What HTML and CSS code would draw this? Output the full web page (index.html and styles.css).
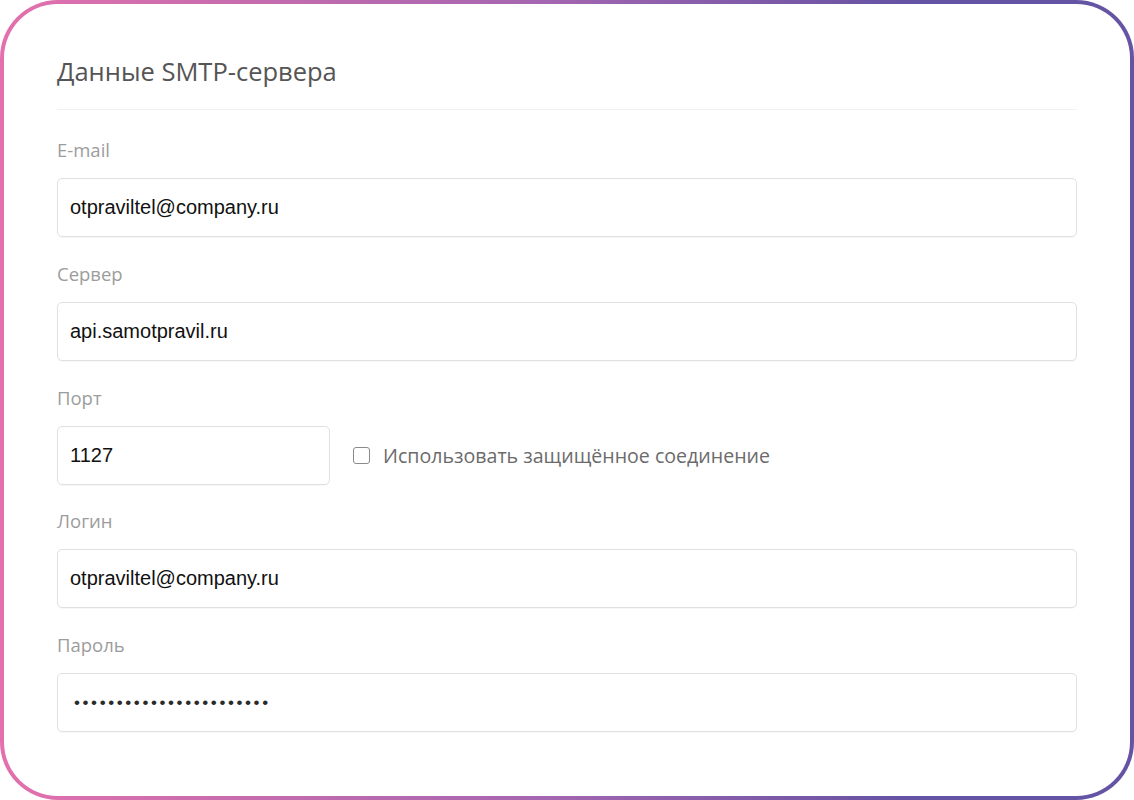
FILE: index.html
```html
<!DOCTYPE html>
<html lang="ru">
<head>
<meta charset="utf-8">
<title>Данные SMTP-сервера</title>
<link rel="stylesheet" href="styles.css">
</head>
<body>
<div class="frame">
  <div class="card">
    <h2 class="title">Данные SMTP-сервера</h2>
    <div class="form">
      <div class="group">
        <div class="label">E-mail</div>
        <div class="input">otpraviltel@company.ru</div>
      </div>
      <div class="group">
        <div class="label">Сервер</div>
        <div class="input">api.samotpravil.ru</div>
      </div>
      <div class="group">
        <div class="label">Порт</div>
        <div class="row">
          <div class="input port">1127</div>
          <label class="check"><span class="box"></span><span class="check-text">Использовать защищённое соединение</span></label>
        </div>
      </div>
      <div class="group">
        <div class="label">Логин</div>
        <div class="input">otpraviltel@company.ru</div>
      </div>
      <div class="group">
        <div class="label">Пароль</div>
        <div class="input password">•••••••••••••••••••••••</div>
      </div>
    </div>
  </div>
</div>
</body>
</html>
```

FILE: styles.css
```css
html, body {
  margin: 0;
  padding: 0;
  background: #ffffff;
}

.frame {
  width: 1134px;
  height: 800px;
  box-sizing: border-box;
  padding: 4px;
  border-radius: 58px;
  background: linear-gradient(90deg, #e271ad 0%, #a466b0 48%, #6553a3 80%, #6553a3 100%);
}

.card {
  height: 100%;
  box-sizing: border-box;
  background: #ffffff;
  border-radius: 54px;
  padding: 51px 53px 0;
}

.title {
  margin: 0;
  font-family: "Open Sans", "Noto Sans", sans-serif;
  font-weight: 400;
  font-size: 25.5px;
  line-height: 32px;
  color: #555555;
  padding-bottom: 22px;
  border-bottom: 1px solid #f1f1f1;
}

.form {
  margin-top: 28px;
}

.group {
  margin-bottom: 24.75px;
}

.label {
  font-family: "Open Sans", "Noto Sans", sans-serif;
  font-size: 18.5px;
  line-height: 24px;
  color: #9c9c9c;
  margin-bottom: 16px;
}

.input {
  height: 59px;
  box-sizing: border-box;
  border: 1px solid #e0e0e0;
  border-radius: 5px;
  padding: 0 12px;
  display: flex;
  align-items: center;
  font-family: "Liberation Sans", Arial, sans-serif;
  font-size: 20px;
  color: #111111;
  box-shadow: 0 1px 1px rgba(0, 0, 0, 0.03);
}

.row {
  display: flex;
  align-items: center;
  gap: 23px;
}

.port {
  width: 273px;
}

.check {
  display: flex;
  align-items: center;
  gap: 13px;
}

.box {
  width: 17px;
  height: 17px;
  box-sizing: border-box;
  border: 1.5px solid #8a8a8a;
  border-radius: 3px;
}

.check-text {
  font-family: "Open Sans", "Noto Sans", sans-serif;
  font-size: 19.6px;
  color: #6b6b6b;
}

.password {
  padding-left: 16px;
  font-size: 17px;
  letter-spacing: 2.6px;
  color: #2a2a2a;
}
```
